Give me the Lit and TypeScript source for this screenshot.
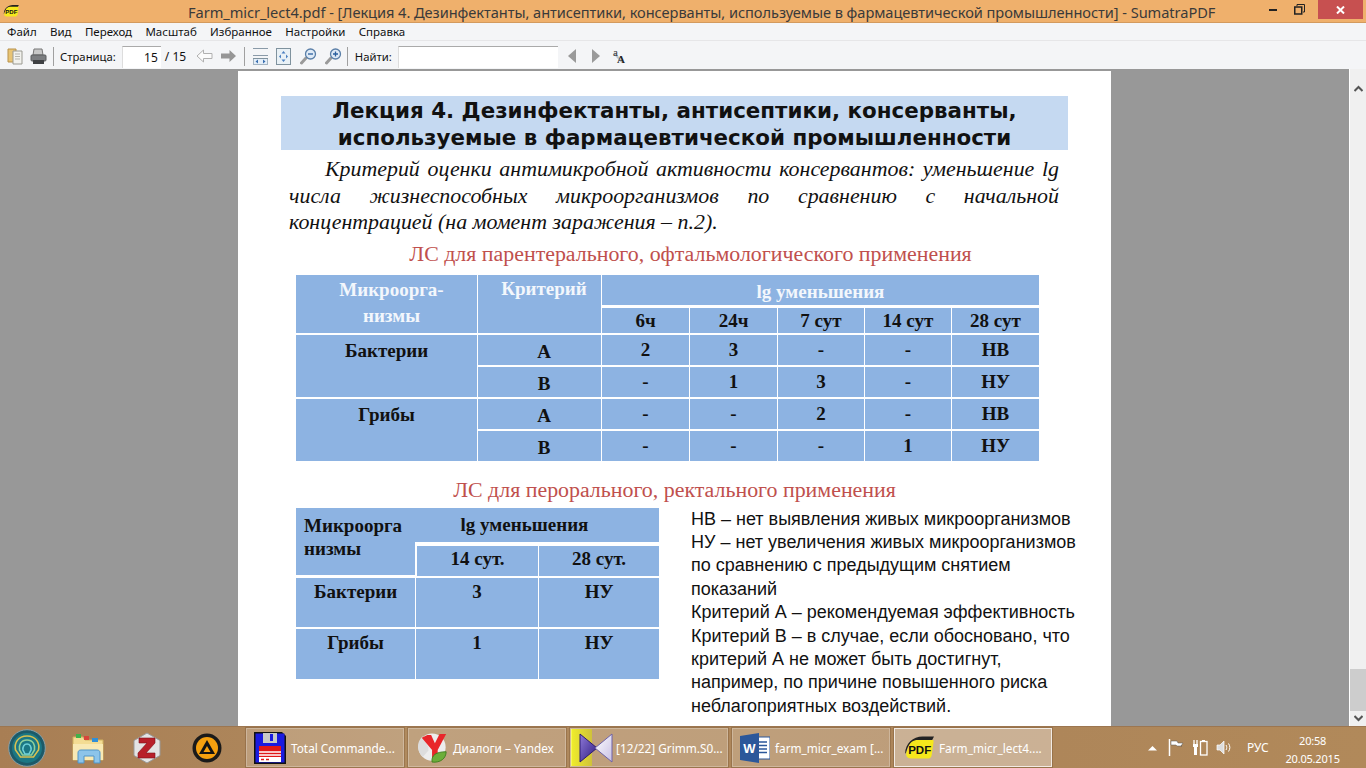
import { html, css, LitElement } from "lit";
import { customElement } from "lit/decorators.js";

const pdfLogo = (w: number, h: number) => html`<svg width=${w} height=${h} viewBox="0 0 26 20">
  <path d="M1 15 C1 6 8 0 16 0 L26 0 L24 4 L12 4 C6 4 3 8 2 14Z" fill="#222"/>
  <path d="M4 9 C5 5 8 3 12 3 L25 3 Q26 3 25.6 5 L24 16 Q23.6 19 21 19 L6 19 Q1 19 2 14 Z" fill="#f6e81c"/>
  <text x="13.6" y="15" text-anchor="middle" font-family="Liberation Sans" font-weight="700" font-size="10" fill="#111">PDF</text>
</svg>`;

const icons = {
  open: html`<svg width="16" height="18" viewBox="0 0 16 18">
    <path d="M1 2h8v13H1z" fill="#e8c474" stroke="#b8914a"/>
    <path d="M6 4h9v13H6z" fill="#f2f2ee" stroke="#9a9a92"/>
    <path d="M8 7h5M8 9.500h5M8 12h5" stroke="#b5b5ad"/>
  </svg>`,
  print: html`<svg width="17" height="17" viewBox="0 0 17 17">
    <path d="M4 1h8l1 6H3z" fill="#c8c8c8" stroke="#777"/>
    <rect x="1" y="7" width="15" height="6" rx="1" fill="#7c7e81" stroke="#5a5c5f"/>
    <rect x="3" y="12" width="11" height="4" fill="#3f4144"/>
  </svg>`,
  back: html`<svg width="17" height="14" viewBox="0 0 17 14"><path d="M7.500 1 1 7l6.500 6V9.500H16v-5H7.500z" fill="#fbfbfb" stroke="#b0b0b0"/></svg>`,
  fwd: html`<svg width="17" height="14" viewBox="0 0 17 14"><path d="M9.500 1 16 7l-6.500 6V9.500H1v-5h8.500z" fill="#969696"/></svg>`,
  fitWidth: html`<svg width="15" height="17" viewBox="0 0 15 17">
    <path d="M0 .5h15M0 7.500h15" stroke="#8a9aa8" fill="none"/>
    <rect x=".5" y="10.500" width="14" height="6" fill="#e4eef8" stroke="#a4b4c2"/>
    <path d="M0 10.500h15" stroke="#7f929e"/>
    <path d="M2.500 13.500l2.500-2v4zM12.500 13.500l-2.500-2v4z" fill="#3a6fb0"/>
  </svg>`,
  fitPage: html`<svg width="15" height="17" viewBox="0 0 15 17">
    <rect x=".5" y=".5" width="14" height="16" fill="#e9f1f6" stroke="#7f929e"/>
    <path d="M7.500 3l2 2.500h-4zM7.500 14l2-2.500h-4zM3 8.500l2-2v4zM12 8.500l-2-2v4z" fill="#4a7fc0"/>
  </svg>`,
  zoomOut: html`<svg width="17" height="17" viewBox="0 0 17 17">
    <path d="M6 10 1.500 15" stroke="#9a9a9a" stroke-width="3" stroke-linecap="round"/>
    <circle cx="10.500" cy="6" r="5" fill="#dfeaf6" stroke="#5a7fa8" stroke-width="1.300"/>
    <path d="M8 6h5" stroke="#2a5f9e" stroke-width="1.300"/>
  </svg>`,
  zoomIn: html`<svg width="17" height="17" viewBox="0 0 17 17">
    <path d="M6 10 1.500 15" stroke="#9a9a9a" stroke-width="3" stroke-linecap="round"/>
    <circle cx="10.500" cy="6" r="5" fill="#dfeaf6" stroke="#5a7fa8" stroke-width="1.300"/>
    <path d="M8 6h5M10.500 3.500v5" stroke="#2a5f9e" stroke-width="1.300"/>
  </svg>`,
  prev: html`<svg width="8" height="14" viewBox="0 0 8 14"><path d="M8 0v14L0 7z" fill="#9a9a9a"/></svg>`,
  next: html`<svg width="8" height="14" viewBox="0 0 8 14"><path d="M0 0v14l8-7z" fill="#9a9a9a"/></svg>`,
  matchCase: html`<svg width="16" height="24" viewBox="0 0 16 24">
    <path d="M2 9 10 18" stroke="#b9c6d4" stroke-width="2"/>
    <text x="1" y="12" font-family="Liberation Serif" font-size="11" fill="#333">a</text>
    <text x="5" y="19" font-family="Liberation Serif" font-weight="700" font-size="11" fill="#222">A</text>
  </svg>`,
  shell: html`<svg width="38" height="38" viewBox="0 0 38 38">
    <circle cx="19" cy="19" r="18.300" fill="#1d5a68" stroke="#8aa0a8" stroke-width="1"/>
    <circle cx="19" cy="19" r="15" fill="#1b7784"/>
    <path d="M19 7C10 7 6 14 7.500 21l5 7h13l5-7C32 14 28 7 19 7z" fill="none" stroke="#d9c050" stroke-width="1.600"/>
    <path d="M19 11c-6 0-8.500 5-7.500 10l3 5h9l3-5c1-5-1.500-10-7.500-10z" fill="none" stroke="#8fcf9a" stroke-width="1.600"/>
    <path d="M19 15c-3 0-4.500 3-4 6l2 4h4l2-4c.5-3-1-6-4-6z" fill="none" stroke="#6fd0d8" stroke-width="1.600"/>
  </svg>`,
  explorer: html`<svg width="33" height="32" viewBox="0 0 33 32">
    <path d="M1 5h10l2 3h18v20H1z" fill="#f3dc93" stroke="#cfb161"/>
    <rect x="4" y="2" width="5" height="4" fill="#3fb24a"/><rect x="12" y="4" width="5" height="4" fill="#d8453a"/><rect x="20" y="6" width="6" height="4" fill="#2f8fd8"/>
    <path d="M1 12h30v16H1z" fill="#f8e9b4"/>
    <path d="M6 31V21c0-2 1-3 3-3h16c2 0 3 1 3 3v10h-6v-7H12v7z" fill="#8cc4ea" stroke="#4f94c8"/>
  </svg>`,
  zotero: html`<svg width="28" height="32" viewBox="0 0 28 32">
    <path d="M14 1 27 8.500v15L14 31 1 23.500v-15z" fill="#e4e4e4" stroke="#999"/>
    <path d="M6 6h16v5l-9 10h9v5H5v-5l9-10H6z" fill="#b8202a" stroke="#7e1018" stroke-width=".6"/>
  </svg>`,
  aimp: html`<svg width="30" height="30" viewBox="0 0 30 30">
    <circle cx="15" cy="15" r="14.500" fill="#1a1a1a"/>
    <circle cx="15" cy="15" r="11" fill="#f5a00f"/>
    <path d="M15 7 23 21H7z" fill="#141414"/>
    <path d="M15 13 18.500 19h-7z" fill="#f5a00f"/>
  </svg>`,
  floppy: html`<svg width="32" height="32" viewBox="0 0 32 32">
    <path d="M0 0h28l4 4v28H0z" fill="#111"/>
    <rect x="1.500" y="1.500" width="29" height="29" fill="#1a1ae0"/>
    <rect x="9" y="1" width="14" height="10" fill="#c8c8c8"/><rect x="16" y="2" width="3" height="7" fill="#1a1ae0"/>
    <rect x="5" y="14" width="22" height="16" fill="#e01818"/>
    <path d="M5 20h22M5 23h22" stroke="#fff" stroke-width="1.500"/>
    <rect x="5" y="25" width="22" height="5" fill="#fff"/>
    <path d="M7 27.500h3M12 27.500h3" stroke="#e01818" stroke-width="1.500"/>
  </svg>`,
  yandex: html`<svg width="30" height="30" viewBox="0 0 32 32">
    <circle cx="15" cy="15" r="14.500" fill="#ededed"/>
    <path d="M5 3.500A14.500 14.500 0 0 0 5 25.500L11 19V15L5 3.500z" fill="#ddd"/>
    <path d="M4 5 10 2h4l4 9 5-10h7l-9 17v9h-6v-9z" fill="#e8262a"/>
    <path d="M15 31c-1-7 4-11 15-11 0 7-6 12-15 11z" fill="#6cae3a" stroke="#3f7f20"/>
  </svg>`,
  kmp: html`<svg width="34" height="30" viewBox="0 0 34 30">
    <defs>
      <linearGradient id="kl" x1="0" y1="0" x2="1" y2="1"><stop offset="0" stop-color="#8f7ad8"/><stop offset="1" stop-color="#2d1a80"/></linearGradient>
      <linearGradient id="kr" x1="0" y1="0" x2="1" y2="1"><stop offset="0" stop-color="#ffffff"/><stop offset="1" stop-color="#c8c0e4"/></linearGradient>
    </defs>
    <path d="M1 1 18 15 1 29z" fill="url(#kl)" stroke="#2d1a70"/>
    <path d="M33 1 16 15 33 29z" fill="url(#kr)" stroke="#6e62a8"/>
  </svg>`,
  word: html`<svg width="30" height="30" viewBox="0 0 30 30">
    <rect x="14" y="4" width="16" height="22" fill="#fff" stroke="#2b579a"/>
    <path d="M17 9h10M17 12.500h10M17 16h10M17 19.500h10" stroke="#2b579a" stroke-width="1.500"/>
    <path d="M0 3 19 0v30L0 27z" fill="#2b579a"/>
    <text x="9.500" y="20" text-anchor="middle" font-family="Liberation Sans" font-weight="700" font-size="13" fill="#fff">W</text>
  </svg>`,
  trayUp: html`<svg width="9" height="6" viewBox="0 0 9 6"><path d="M0 5.500 4.500 1 9 5.500z" fill="#fff"/></svg>`,
  flag: html`<svg width="16" height="17" viewBox="0 0 16 17">
    <path d="M1.500 0v17" stroke="#fff" stroke-width="1.500"/>
    <path d="M3 2h6l1 2h5l-2 3 1 0H9L8 6H3z" fill="#fff" stroke="#555" stroke-width=".5"/>
  </svg>`,
  power: html`<svg width="16" height="17" viewBox="0 0 16 17">
    <path d="M2 1v4M5 1v4" stroke="#fff" stroke-width="1.300"/><path d="M1 5h5v3H5v8H2V8H1z" fill="#fff"/>
    <rect x="8.500" y="2.500" width="6.500" height="13.500" fill="none" stroke="#fff" stroke-width="1.300"/>
    <rect x="10" y="1" width="3" height="2" fill="#fff"/>
  </svg>`,
  speaker: html`<svg width="15" height="15" viewBox="0 0 15 15">
    <path d="M1 5h3l4-4v13L4 10H1z" fill="#ddd" stroke="#fff" stroke-width=".7"/>
    <path d="M10 5c1 1.500 1 3.500 0 5M12.500 3.500c1.800 2.500 1.800 5.500 0 8" fill="none" stroke="#fff"/>
  </svg>`,
};

type Row = string[];

const mainRows: { name: string; rows: Row[] }[] = [
  { name: "Бактерии", rows: [["А", "2", "3", "-", "-", "НВ"], ["В", "-", "1", "3", "-", "НУ"]] },
  { name: "Грибы", rows: [["А", "-", "-", "2", "-", "НВ"], ["В", "-", "-", "-", "1", "НУ"]] },
];

const legend = [
  "НВ – нет выявления живых микроорганизмов",
  "НУ – нет увеличения живых микроорганизмов по сравнению с предыдущим снятием показаний",
  "Критерий А – рекомендуемая эффективность",
  "Критерий В – в случае, если обосновано, что критерий А не может быть достигнут, например, по причине повышенного риска неблагоприятных воздействий.",
];

@customElement("app-root")
export class AppRoot extends LitElement {
  static styles = css`
    :host {
      display: flex;
      flex-direction: column;
      width: 1366px;
      height: 768px;
      overflow: hidden;
      font-family: "Noto Sans", "Liberation Sans", sans-serif;
      background: #989898;
    }
    .titlebar {
      height: 22px;
      flex: none;
      display: flex;
      align-items: center;
      position: relative;
      background: #efb06c;
      border-bottom: 1px solid #d39a5e;
      color: #3a3a3a;
      font-size: 14.6px;
      padding-left: 3px;
    }
    .titlebar .text {
      position: absolute;
      left: 188px;
      top: 2px;
      white-space: nowrap;
      line-height: 20px;
      letter-spacing: -0.05px;
    }
    .winbtns {
      margin-left: auto;
      display: flex;
      align-items: flex-start;
      align-self: flex-start;
      padding-right: 3px;
    }
    .win { display: flex; align-items: center; justify-content: center; height: 19px; width: 27px; }
    .win.close { background: #c75050; width: 45px; margin-left: 5px; }
    .menubar {
      height: 17px;
      flex: none;
      display: flex;
      align-items: center;
      background: #f4f5f7;
      border-bottom: 1px solid #e6e6e8;
      font-size: 11.5px;
      color: #111;
      padding-left: 7px;
      gap: 13.3px;
    }
    .toolbar {
      height: 28px;
      flex: none;
      display: flex;
      align-items: center;
      background: #f4f5f7;
      font-size: 11.3px;
      color: #111;
      padding-left: 7px;
      box-sizing: border-box;
      padding-top: 2px;
    }
    .sep { width: 1px; height: 19px; background: #a0a0a0; }
    .input {
      height: 22px;
      box-sizing: border-box;
      background: #fff;
      border-top: 1px solid #aaa;
      border-left: 1px solid #ddd;
      margin-top: 2px;
      text-align: right;
      line-height: 22px;
      font-size: 12px;
      padding-right: 1px;
    }
    .main { flex: 1; min-height: 0; display: flex; background: #f4f5f7; }
    .viewport {
      flex: 1;
      min-width: 0;
      background: #989898;
      padding: 2px 0 0 238px;
      box-sizing: border-box;
      overflow: hidden;
    }
    .scrollbar {
      width: 16px;
      background: #f0f0f0;
      border-left: 1px solid #fff;
      display: flex;
      flex-direction: column;
      align-items: center;
    }
    .scrollbar .up { height: 15px; padding-top: 6px; flex: none; }
    .scrollbar .track { flex: 1; width: 100%; display: flex; flex-direction: column; justify-content: flex-end; }
    .scrollbar .thumb { height: 42px; background: #cdcdcd; }
    .scrollbar .down { height: 15px; flex: none; display: flex; align-items: center; }
    .page {
      width: 873px;
      height: 100%;
      background: #fff;
      box-sizing: border-box;
      padding: 25px 0 0 43px;
      font-family: "Liberation Serif", serif;
      overflow: hidden;
    }
    .slide-title {
      width: 787px;
      height: 54px;
      background: #c5d9f1;
      text-align: center;
      font-family: "DejaVu Sans", sans-serif;
      font-weight: 700;
      font-size: 21.400px;
      line-height: 27px;
      color: #111;
      padding-top: 1px;
      box-sizing: border-box;
    }
    .lead {
      width: 770px;
      margin: 6px 0 0 8px;
      font-style: italic;
      font-size: 21.900px;
      line-height: 26.500px;
      text-align: justify;
      text-indent: 36px;
      color: #111;
    }
    h2 {
      margin: 0;
      font-weight: 400;
      font-size: 21.900px;
      color: #c0504d;
      text-align: center;
      line-height: 26px;
    }
    .h1 { width: 787px; margin-top: 5px; margin-left: 16px; }
    .grid {
      display: grid;
      background: #fff;
      margin-left: 15px;
      font-weight: 700;
      font-size: 19px;
      color: #111;
      width: max-content;
    }
    .cell { background: #8db3e2; text-align: center; line-height: 20px; }
    .t1 {
      margin-top: 8px;
      grid-template-columns: 181px 123px 87px 87px 86px 86px 87px;
      grid-template-rows: 30px 26px 30px 30px 30px 30px;
      gap: 2px 1px;
    }
    .t1 .cell { padding-top: 5px; box-sizing: border-box; }
    .t1 .inv { color: #f3f7fc; }
    .t1 .sub { margin-top: 1px; padding-top: 3px; }
    .t1 .name { padding-top: 6px; }
    .t1 .lg { padding-top: 7px; }
    .t1 .micro { line-height: 26px; padding: 2px 0 0 10px; }
    .t1 .crit { padding: 4px 0 0 9px; }
    .t1 .letter { padding: 7px 0 0 9px; }
    .h2 { width: 787px; margin-top: 16px; margin-left: 0; }
    .lower { display: flex; margin-top: 5px; align-items: flex-start; }
    .t2 {
      grid-template-columns: 119px 2px 121px 1px 120px;
      grid-template-rows: 34px 4px 30px 2px 49px 2px 50px;
      margin-top: 0;
    }
    .t2 .cell { box-sizing: border-box; }
    .t2 .micro { text-align: left; padding: 6px 0 0 8px; line-height: 23.500px; grid-row: 1 / 4; grid-column: 1; margin-bottom: 1px; }
    .t2 .lg { grid-column: 2 / 6; grid-row: 1; padding-top: 7px; padding-right: 24px; margin-left: -1px; }
    .t2 .d1 { grid-column: 3; grid-row: 3; padding-top: 3px; }
    .t2 .d2 { grid-column: 5; grid-row: 3; padding-top: 3px; }
    .t2 .name { grid-column: 1; padding-top: 4px; }
    .t2 .v1 { grid-column: 3; padding-top: 4px; margin-left: -1px; }
    .t2 .v2 { grid-column: 5; padding-top: 4px; }
    .legend {
      width: 395px;
      margin-left: 32px;
      font-family: "Liberation Sans", sans-serif;
      font-size: 18px;
      line-height: 23.400px;
      color: #111;
    }
    .taskbar {
      height: 42px;
      flex: none;
      display: flex;
      align-items: center;
      background: linear-gradient(90deg, #a87e54, #b08a5e 30%, #ad8559 70%, #b1895a);
      border-top: 1px solid #9c7650;
      box-sizing: border-box;
      color: #fff;
      font-size: 11.800px;
    }
    .pin { width: 60px; display: flex; justify-content: center; flex: none; }
    .pins { display: flex; width: 246px; flex: none; align-items: center; }
    .pins .pin:first-child { width: 54px; margin-right: 8px; }
    .tasks { display: flex; gap: 4px; align-self: stretch; flex: none; padding: 1px 0 0; }
    .task {
      position: relative;
      width: 158px;
      height: 39px;
      box-sizing: border-box;
      display: flex;
      align-items: center;
      gap: 5px;
      padding-left: 7px;
      background: rgba(255, 255, 255, 0.2);
      border: 1px solid rgba(255, 255, 255, 0.25);
      box-shadow: 0 0 0 1px rgba(90, 60, 30, 0.25);
      white-space: nowrap;
      overflow: hidden;
    }
    .task.ya { padding-left: 9px; }
    .task.active { background: rgba(255, 255, 255, 0.36); border-color: rgba(255, 255, 255, 0.75); padding-left: 9px; }
    .task.kmp { padding-left: 8px; gap: 3px; }
    .task.kmp::before {
      content: "";
      position: absolute;
      left: 0;
      top: 0;
      bottom: 0;
      width: 21px;
      background: linear-gradient(90deg, #f0ee2a, #cfc23a);
      box-shadow: inset 1px 0 0 #f8f85a;
    }
    .task > svg { position: relative; flex: none; }
    .task .t { position: relative; }
    .tray { flex: 1; display: flex; align-items: center; padding-left: 96px; }
    .tray > * { flex: none; }
    .lang { font-size: 12px; }
    .clock { text-align: center; font-size: 11px; letter-spacing: -0.2px; line-height: 18px; width: 70px; margin-left: 9px; padding-top: 4px; }
  `;

  private cells() {
    return mainRows.flatMap((group, g) => {
      const first = 3 + g * 2;
      return html`
        <div class="cell name" style="grid-row: ${first} / ${first + 2}; grid-column: 1">${group.name}</div>
        ${group.rows.map((row) =>
          row.map((v, i) => html`<div class="cell ${i === 0 ? "letter" : ""}">${v}</div>`),
        )}
      `;
    });
  }

  render() {
    return html`
      <div class="titlebar">
        ${pdfLogo(16, 12)}
        <span class="text">Farm_micr_lect4.pdf - [Лекция 4. Дезинфектанты, антисептики, консерванты, используемые в фармацевтической промышленности] - SumatraPDF</span>
        <div class="winbtns">
          <div class="win"><svg width="8" height="2"><rect width="8" height="2" fill="#222"/></svg></div>
          <div class="win"><svg width="11" height="11" viewBox="0 0 11 11"><path d="M3 2V.5h7.500V8H9" fill="none" stroke="#222"/><rect x=".75" y="3" width="7" height="7" fill="none" stroke="#222" stroke-width="1.500"/></svg></div>
          <div class="win close"><svg width="9" height="8" viewBox="0 0 9 8"><path d="M1 .5 8 7.500M8 .5 1 7.500" stroke="#fff" stroke-width="2"/></svg></div>
        </div>
      </div>
      <div class="menubar">
        ${["Файл", "Вид", "Переход", "Масштаб", "Избранное", "Настройки", "Справка"].map((m) => html`<span>${m}</span>`)}
      </div>
      <div class="toolbar">
        ${icons.open}
        <span style="width:7px"></span>${icons.print}
        <span style="width:6px"></span><span class="sep"></span>
        <span style="width:6px"></span><span>Страница:</span>
        <span style="width:6px"></span><div class="input" style="width:39px;padding-right:3px">15</div>
        <span style="width:4px"></span><span style="width:24px;font-size:12px">/ 15</span>
        <span style="width:7px"></span>${icons.back}
        <span style="width:7px"></span>${icons.fwd}
        <span style="width:7px"></span><span class="sep"></span>
        <span style="width:8px"></span>${icons.fitWidth}
        <span style="width:8px"></span>${icons.fitPage}
        <span style="width:9px"></span>${icons.zoomOut}
        <span style="width:8px"></span>${icons.zoomIn}
        <span style="width:5px"></span><span class="sep"></span>
        <span style="width:7px"></span><span>Найти:</span>
        <span style="width:6px"></span><div class="input" style="width:160px"></div>
        <span style="width:10px"></span>${icons.prev}
        <span style="width:16px"></span>${icons.next}
        <span style="width:12px"></span>${icons.matchCase}
      </div>
      <div class="main">
        <div class="viewport">
          <div class="page">
            <div class="slide-title">Лекция 4. Дезинфектанты, антисептики, консерванты,<br />используемые в фармацевтической промышленности</div>
            <p class="lead">Критерий оценки антимикробной активности консервантов: уменьшение lg числа жизнеспособных микроорганизмов по сравнению с начальной концентрацией (на момент заражения – п.2).</p>
            <h2 class="h1">ЛС для парентерального, офтальмологического применения</h2>
            <div class="grid t1">
              <div class="cell inv micro" style="grid-row: 1 / 3; grid-column: 1">Микроорга-<br />низмы</div>
              <div class="cell inv crit" style="grid-row: 1 / 3; grid-column: 2">Критерий</div>
              <div class="cell inv lg" style="grid-column: 3 / 8; grid-row: 1">lg уменьшения</div>
              ${["6ч", "24ч", "7 сут", "14 сут", "28 сут"].map((h) => html`<div class="cell sub">${h}</div>`)}
              ${this.cells()}
            </div>
            <h2 class="h2">ЛС для перорального, ректального применения</h2>
            <div class="lower">
              <div class="grid t2">
                <div class="cell micro">Микроорга<br />низмы</div>
                <div class="cell lg">lg уменьшения</div>
                <div class="cell d1">14 сут.</div>
                <div class="cell d2">28 сут.</div>
                <div class="cell name" style="grid-row: 5">Бактерии</div>
                <div class="cell v1" style="grid-row: 5">3</div>
                <div class="cell v2" style="grid-row: 5">НУ</div>
                <div class="cell name" style="grid-row: 7">Грибы</div>
                <div class="cell v1" style="grid-row: 7">1</div>
                <div class="cell v2" style="grid-row: 7">НУ</div>
              </div>
              <div class="legend">${legend.map((l) => html`<div>${l}</div>`)}</div>
            </div>
          </div>
        </div>
        <div class="scrollbar">
          <div class="up"><svg width="9" height="7" viewBox="0 0 9 7"><path d="M.5 6 4.500 2 8.500 6" fill="none" stroke="#555" stroke-width="2"/></svg></div>
          <div class="track"><div class="thumb"></div></div>
          <div class="down"><svg width="9" height="7" viewBox="0 0 9 7"><path d="M.5 1 4.500 5 8.500 1" fill="none" stroke="#555" stroke-width="2"/></svg></div>
        </div>
      </div>
      <div class="taskbar">
        <div class="pins">
          <div class="pin">${icons.shell}</div>
          <div class="pin" style="width:52px">${icons.explorer}</div>
          <div class="pin" style="width:66px">${icons.zotero}</div>
          <div class="pin" style="width:54px">${icons.aimp}</div>
        </div>
        <div class="tasks">
          <div class="task">${icons.floppy}<span class="t">Total Commande...</span></div>
          <div class="task ya">${icons.yandex}<span class="t">Диалоги – Yandex</span></div>
          <div class="task kmp">${icons.kmp}<span class="t">[12/22] Grimm.S0...</span></div>
          <div class="task">${icons.word}<span class="t">farm_micr_exam [...</span></div>
          <div class="task active">${pdfLogo(30, 24)}<span class="t">Farm_micr_lect4....</span></div>
        </div>
        <div class="tray">
          ${icons.trayUp}
          <span style="width:11px"></span>${icons.flag}
          <span style="width:8px"></span>${icons.power}
          <span style="width:8px"></span>${icons.speaker}
          <span style="width:16px"></span><span class="lang">РУС</span>
          <div class="clock">20:58<br />20.05.2015</div>
        </div>
      </div>
    `;
  }
}
